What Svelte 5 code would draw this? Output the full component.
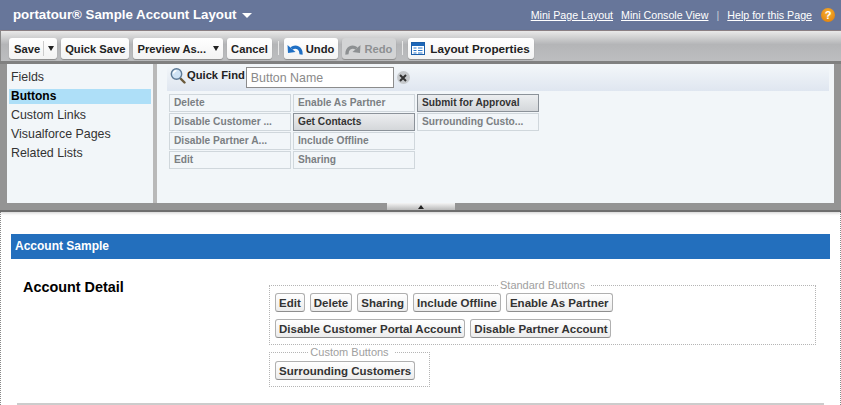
<script>
  const leftItems = ["Fields", "Buttons", "Custom Links", "Visualforce Pages", "Related Lists"];
  const palette = [
    { label: "Delete" },
    { label: "Enable As Partner" },
    { label: "Submit for Approval", used: true },
    { label: "Disable Customer ..." },
    { label: "Get Contacts", used: true },
    { label: "Surrounding Custo..." },
    { label: "Disable Partner A..." },
    { label: "Include Offline" },
    null,
    { label: "Edit" },
    { label: "Sharing" },
    null,
  ];
  const standardRows = [
    ["Edit", "Delete", "Sharing", "Include Offline", "Enable As Partner"],
    ["Disable Customer Portal Account", "Disable Partner Account"],
  ];
</script>

<div class="page">
  <header class="top">
    <div class="title">portatour® Sample Account Layout <span class="caret"></span></div>
    <nav class="links">
      <a href="#mini">Mini Page Layout</a>
      <a href="#console">Mini Console View</a>
      <span class="pipe">|</span>
      <a href="#help">Help for this Page</a>
      <span class="help">?</span>
    </nav>
  </header>

  <section class="editor">
    <div class="toolbar">
      <button class="tb save">Save<span class="split"><i class="down"></i></span></button>
      <button class="tb">Quick Save</button>
      <button class="tb">Preview As...<i class="down near"></i></button>
      <button class="tb">Cancel</button>
      <span class="sep"></span>
      <button class="tb icon">
        <svg width="16" height="14" viewBox="0 0 16 14">
          <path d="M14 12.5 C14.5 6.5 9 3 4.5 6.5" stroke="#1f6fc4" stroke-width="3.2" fill="none" />
          <path d="M0.5 3 L1 11 L8.5 10 Z" fill="#1f6fc4" />
        </svg>
        Undo
      </button>
      <button class="tb icon off">
        <svg width="16" height="14" viewBox="0 0 16 14">
          <path d="M2 12.5 C1.5 6.5 7 3 11.5 6.5" stroke="#8d9092" stroke-width="3.2" fill="none" />
          <path d="M15.5 3 L15 11 L7.5 10 Z" fill="#8d9092" />
        </svg>
        Redo
      </button>
      <span class="sep"></span>
      <button class="tb icon wide">
        <svg width="14" height="13" viewBox="0 0 14 13">
          <rect x="0.5" y="0.5" width="13" height="12" fill="#fff" stroke="#1c5ea8" />
          <rect x="1" y="1" width="12" height="3" fill="#1c66b8" />
          <path d="M2.5 6h3M7 6h4.5M2.5 8.5h3M7 8.5h4.5M2.5 11h3M7 11h4.5" stroke="#2a76c8" />
        </svg>
        Layout Properties
      </button>
    </div>

    <div class="panes">
      <ul class="left">
        {#each leftItems as item}
          <li class:active={item == "Buttons"}>{item}</li>
        {/each}
      </ul>
      <div class="right">
        <div class="find">
          <svg class="lens" width="16" height="18" viewBox="0 0 16 18">
            <path d="M10 11 L14.5 15.5" stroke="#6b5a3a" stroke-width="2.4" stroke-linecap="round" />
            <circle cx="6.5" cy="7" r="5.2" fill="#cfe3f5" stroke="#5d7a96" stroke-width="1.4" />
            <path d="M3.5 6.5 A3.4 3.4 0 0 1 6.5 3.6" stroke="#fff" stroke-width="1.4" fill="none" />
          </svg>
          <b>Quick Find</b>
          <input type="text" placeholder="Button Name" />
          <span class="clear">
            <svg width="8" height="8" viewBox="0 0 8 8"><path d="M1 1 L7 7 M7 1 L1 7" stroke="#333" stroke-width="2" /></svg>
          </span>
        </div>
        <div class="grid">
          {#each palette as p}
            {#if p}
              <div class="cell" class:used={p.used}>{p.label}</div>
            {:else}
              <div></div>
            {/if}
          {/each}
        </div>
      </div>
    </div>

    <div class="band">
      <span class="grip"><i></i></span>
    </div>
  </section>

  <main class="layout">
    <h2 class="bar">Account Sample</h2>
    <div class="detail">
      <h3>Account Detail</h3>
      <div class="sets">
        <fieldset class="std">
          <legend>Standard Buttons</legend>
          {#each standardRows as row}
            <div class="row">
              {#each row as b}
                <button class="btn">{b}</button>
              {/each}
            </div>
          {/each}
        </fieldset>
        <fieldset class="custom">
          <legend>Custom Buttons</legend>
          <div class="row">
            <button class="btn">Surrounding Customers</button>
          </div>
        </fieldset>
      </div>
    </div>
    <hr />
  </main>
</div>

<style>
  :global(body) {
    margin: 0;
    background: #fff;
    font-family: "Liberation Sans", Arial, sans-serif;
  }
  .page {
    width: 841px;
    height: 405px;
    overflow: hidden;
    font-size: 12px;
    color: #222;
  }
  .top {
    background: #67769a;
    border-bottom: 1px solid #8f8488;
    display: flex;
    align-items: center;
    justify-content: space-between;
    padding: 0 6px 1px 13px;
    box-sizing: border-box;
    height: 31px;
  }
  .title {
    color: #fff;
    font-size: 13.3px;
    font-weight: bold;
    display: flex;
    align-items: center;
    gap: 5px;
  }
  .caret {
    width: 0;
    height: 0;
    border-left: 5px solid transparent;
    border-right: 5px solid transparent;
    border-top: 5px solid #fff;
    margin-top: 1px;
  }
  .links {
    display: flex;
    align-items: center;
    color: #fff;
    font-size: 10.67px;
  }
  .links a {
    color: #fff;
    margin-right: 8px;
  }
  .pipe {
    margin: 0 8px 0 0;
    color: #c9cedb;
  }
  .links a:nth-of-type(3) {
    margin-right: 9px;
  }
  .help {
    width: 14px;
    height: 14px;
    border-radius: 50%;
    background: radial-gradient(circle at 50% 35%, #f8b030, #dc7a08);
    color: #fff;
    font-weight: bold;
    font-size: 11px;
    line-height: 14px;
    text-align: center;
  }
  .editor {
    box-shadow: 0 1px 3px rgba(0, 0, 0, 0.2);
    position: relative;
  }
  .toolbar {
    height: 30px;
    box-sizing: border-box;
    padding: 7px 0 0 8px;
    background: linear-gradient(#e9e9e9, #b4b5b7 45%, #bdbec0);
    display: flex;
    align-items: flex-start;
    gap: 4px;
    border-left: 1px solid #888;
  }
  .tb {
    height: 21px;
    padding: 0 4px;
    border: 0;
    border-radius: 3px;
    background: linear-gradient(#fff, #f3f3f3);
    box-shadow: 0 1px 1px #8a8a8a;
    font: bold 11.2px "Liberation Sans", Arial, sans-serif;
    color: #222;
    display: flex;
    align-items: center;
    white-space: nowrap;
  }
  .tb.icon {
    gap: 3px;
    padding: 0 4px 0 3px;
  }
  .tb.wide {
    gap: 5px;
    font-size: 11.7px;
  }
  .tb.off {
    background: #d3d4d5;
    color: #8d9092;
  }
  .save {
    padding: 0 0 0 5px;
  }
  .split {
    margin-left: 3px;
    border-left: 1px solid #ccc;
    height: 15px;
    width: 13px;
    display: flex;
    align-items: center;
    justify-content: center;
  }
  .down {
    width: 0;
    height: 0;
    border-left: 3.5px solid transparent;
    border-right: 3.5px solid transparent;
    border-top: 5px solid #222;
  }
  .near {
    margin-left: 7px;
  }
  .sep {
    width: 1px;
    height: 14px;
    margin: 3px 1px 0 2px;
    background: #e8e8e8;
  }
  .panes {
    border-top: 3px solid #808080;
    padding: 0 7px;
    height: 142px;
    box-sizing: border-box;
    display: flex;
    background: #949494;
  }
  .left {
    width: 146px;
    margin: 0;
    padding: 4px 2px 0;
    box-sizing: border-box;
    list-style: none;
    background: #f2f6f9;
  }
  .left li {
    height: 19px;
    line-height: 18px;
    font-size: 12.4px;
    padding-left: 2px;
    color: #333;
  }
  .left li.active {
    background: #aedff8;
    color: #000;
    font-weight: bold;
    font-size: 12px;
    height: 15px;
    line-height: 15px;
    margin: 2px 0;
  }
  .right {
    flex: 1;
    background: #f2f6f9;
    border-left: 4px solid #b9b9b9;
    padding: 2px 5px 0 10px;
  }
  .find {
    height: 25px;
    box-sizing: border-box;
    background: linear-gradient(#f2f6f9, #dfe6f0);
    display: flex;
    align-items: flex-start;
    padding-left: 3px;
  }
  .lens {
    margin: 1px 1px 0 0;
  }
  .find b {
    margin: 3px 1px 0 0;
    font-size: 11.2px;
    color: #222;
  }
  .find input {
    width: 148px;
    height: 21px;
    box-sizing: border-box;
    border: 1px solid #8c8c8c;
    padding: 1px 4px;
    margin: 1px 0 0;
    font: 12.4px "Liberation Sans", Arial, sans-serif;
    background: #fff;
  }
  .find input::placeholder {
    color: #8a8a8a;
    opacity: 1;
  }
  .clear {
    width: 13px;
    height: 13px;
    margin: 5px 0 0 3px;
    border-radius: 50%;
    background: #c6c9cc;
    display: flex;
    align-items: center;
    justify-content: center;
  }
  .grid {
    display: grid;
    grid-template-columns: repeat(3, 122px);
    grid-auto-rows: 18px;
    gap: 1px 2px;
    margin: 3px 0 0 2px;
  }
  .cell {
    border: 1px solid #d0d7dc;
    box-sizing: border-box;
    padding-left: 4px;
    line-height: 16px;
    font-size: 10.2px;
    font-weight: bold;
    color: #7b7f83;
  }
  .cell.used {
    border-color: #8b9299;
    background: linear-gradient(#eceef0, #d4d7da);
    color: #333;
  }
  .band {
    height: 9px;
    box-sizing: border-box;
    background: #949494;
    border-bottom: 2px solid #6e6e6e;
    display: flex;
    justify-content: center;
  }
  .grip {
    width: 68px;
    height: 7px;
    background: linear-gradient(#f4f4f4, #b9b9b9);
    display: flex;
    align-items: center;
    justify-content: center;
  }
  .grip i {
    width: 0;
    height: 0;
    border-left: 3.5px solid transparent;
    border-right: 3.5px solid transparent;
    border-bottom: 4px solid #222;
  }
  .layout {
    border-left: 1px dotted #888;
    border-right: 1px dotted #888;
    box-sizing: border-box;
    padding: 22px 0 0 10px;
    height: 193px;
  }
  .bar {
    margin: 0 10px 0 0;
    height: 25px;
    line-height: 24px;
    background: #236fbd;
    color: #fff;
    font-size: 12px;
    font-weight: bold;
    padding-left: 4px;
  }
  .detail {
    display: flex;
    padding-top: 20px;
  }
  .detail h3 {
    margin: 0;
    width: 258px;
    padding-left: 12px;
    box-sizing: border-box;
    font-size: 14.4px;
    line-height: 16px;
    color: #000;
  }
  fieldset {
    margin: 0;
    padding: 3px 0 0 5px;
    border: 1px dotted #b5b5b5;
  }
  legend {
    color: #a0a0a0;
    font-size: 11px;
    line-height: 12px;
    padding: 0 6px 0 1px;
    text-align: center;
  }
  .std {
    width: 547px;
    height: 66px;
    box-sizing: border-box;
    padding-top: 2px;
  }
  .custom {
    width: 161px;
    height: 41px;
    box-sizing: border-box;
    margin-top: 1px;
  }
  .row {
    display: flex;
    gap: 5px;
    margin-bottom: 7px;
  }
  .btn {
    height: 19px;
    padding: 0 3px;
    box-sizing: border-box;
    border: 1px solid #b0b0b0;
    border-bottom-color: #8f8f8f;
    border-radius: 3px;
    background: linear-gradient(#fff, #ececec);
    font: bold 11.5px "Liberation Sans", Arial, sans-serif;
    color: #333;
    white-space: nowrap;
  }
  hr {
    margin: 16px 16px 0 6px;
    height: 2px;
    border: 0;
    background: #cccccc;
  }
</style>
